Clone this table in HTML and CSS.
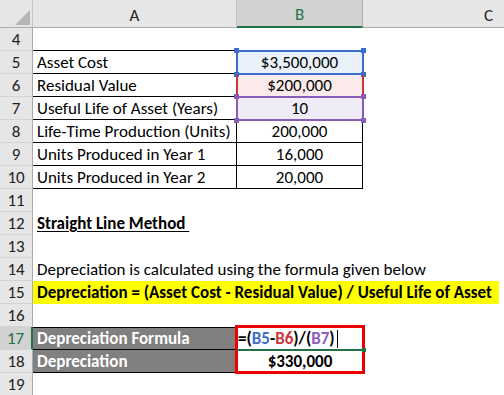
FILE: index.html
```html
<!DOCTYPE html>
<html>
<head>
<meta charset="utf-8">
<link rel="stylesheet" href="styles.css">
</head>
<body>
<div class="sheet">
  <div class="corner"><svg width="33" height="28" viewBox="0 0 33 28"><polygon points="30,10 30,25 15,25" fill="#b5b5b5"/></svg></div>
  <div class="colhead">A</div>
  <div class="colhead sel">B</div>
  <div class="colhead c">C</div>

  <div class="rh">4</div><div class="cell bb"></div><div class="cell bb"></div><div class="cell"></div>
  <div class="rh">5</div><div class="cell lbl bb br">Asset Cost</div><div class="cell val bb br fill-blue">$3,500,000</div><div class="cell"></div>
  <div class="rh">6</div><div class="cell lbl bb br">Residual Value</div><div class="cell val bb br fill-red">$200,000</div><div class="cell"></div>
  <div class="rh">7</div><div class="cell lbl bb br">Useful Life of Asset (Years)</div><div class="cell val bb br fill-purple">10</div><div class="cell"></div>
  <div class="rh">8</div><div class="cell lbl bb br">Life-Time Production (Units)</div><div class="cell val bb br">200,000</div><div class="cell"></div>
  <div class="rh">9</div><div class="cell lbl bb br">Units Produced in Year 1</div><div class="cell val bb br">16,000</div><div class="cell"></div>
  <div class="rh">10</div><div class="cell lbl bb br">Units Produced in Year 2</div><div class="cell val bb br">20,000</div><div class="cell"></div>
  <div class="rh">11</div><div class="cell"></div><div class="cell"></div><div class="cell"></div>
  <div class="rh">12</div><div class="cell lbl bold"><span class="ul">Straight Line Method&nbsp;</span></div><div class="cell"></div><div class="cell"></div>
  <div class="rh">13</div><div class="cell"></div><div class="cell"></div><div class="cell"></div>
  <div class="rh">14</div><div class="cell lbl span3">Depreciation is calculated using the formula given below</div>
  <div class="rh">15</div><div class="cell lbl span3 bold yellow">Depreciation = (Asset Cost - Residual Value) / Useful Life of Asset</div>
  <div class="rh">16</div><div class="cell"></div><div class="cell"></div><div class="cell"></div>
  <div class="rh active">17</div><div class="cell lbl bold gray bt bb">Depreciation Formula</div><div class="cell lbl bold formula">=(<span class="ref-b">B5</span>-<span class="ref-r">B6</span>)/(<span class="ref-p">B7</span>)<span class="caret"></span></div><div class="cell"></div>
  <div class="rh">18</div><div class="cell lbl bold gray bb">Depreciation</div><div class="cell val bold">$330,000</div><div class="cell"></div>
  <div class="rh">19</div><div class="cell"></div><div class="cell"></div><div class="cell"></div>

  <div class="refbox blue"><i class="h tl"></i><i class="h tr"></i><i class="h bl"></i><i class="h br2"></i></div>
  <div class="refbox red"></div>
  <div class="refbox purple"><i class="h tl"></i><i class="h tr"></i><i class="h bl"></i><i class="h br2"></i></div>
  <div class="redbox"></div>
  <div class="activeline"><i class="handle"></i></div>
</div>
</body>
</html>
```
FILE: styles.css
```css
html, body {
  margin: 0;
  padding: 0;
  background: #ffffff;
}
.sheet {
  position: relative;
  display: grid;
  grid-template-columns: 33px 204px 126px 141px;
  grid-template-rows: 28px repeat(16, 23px);
  width: 504px;
  height: 395px;
  overflow: hidden;
  font-family: "Carlito", "Lato", "Liberation Sans", sans-serif;
  font-size: 17px;
  color: #000;
}
.corner {
  background: #e6e6e6;
  border-right: 1px solid #c4c4c4;
  border-bottom: 1px solid #ababab;
  box-sizing: border-box;
}
.corner svg { display: block; }
.colhead {
  background: #e6e6e6;
  border-right: 1px solid #c4c4c4;
  border-bottom: 1px solid #ababab;
  box-sizing: border-box;
  display: flex;
  align-items: center;
  justify-content: center;
  padding-top: 3px;
  color: #222;
  font-size: 17px;
}
.colhead.sel {
  background: #d2d2d2;
  color: #217346;
  border-bottom: 2px solid #217346;
  border-right: 1px solid #ababab;
}
.colhead.c {
  justify-content: flex-end;
  padding-right: 11px;
  border-right: none;
}
.rh {
  background: #e6e6e6;
  border-right: 1px solid #ababab;
  border-bottom: 1px solid #d4d4d4;
  box-sizing: border-box;
  display: flex;
  align-items: center;
  justify-content: center;
  color: #222;
  font-size: 17px;
}
.rh.active {
  background: #d2d2d2;
  color: #217346;
  border-right: 2px solid #217346;
}
.cell {
  box-sizing: border-box;
  display: flex;
  align-items: center;
  white-space: nowrap;
  overflow: visible;
  min-width: 0;
}
.lbl { padding-left: 4px; }
.val { justify-content: center; }
.bold { font-weight: bold; }
.bb { border-bottom: 1px solid #000; }
.bt { border-top: 1px solid #000; }
.br { border-right: 1px solid #000; }
.span3 { grid-column: span 3; }
.yellow {
  background: #ffff00;
  margin-right: 5px;
}
.ul {
  text-decoration: underline;
  text-underline-offset: 2px;
}
.gray {
  background: #808080;
  color: #ffffff;
}
.fill-blue { background: #e8f0f9; }
.fill-red { background: #fbeaea; }
.fill-purple { background: #f0ecf7; }
.formula { padding-left: 1px; }
.ref-b { color: #3d6fc7; }
.ref-r { color: #c8383a; }
.ref-p { color: #8a60b8; }
.caret {
  display: inline-block;
  width: 1px;
  height: 18px;
  background: #000;
  margin-left: 2px;
}
.refbox {
  position: absolute;
  box-sizing: border-box;
  left: 236px;
  width: 128px;
}
.refbox.blue {
  top: 50px;
  height: 25px;
  border: 2px solid #3b6dcb;
}
.refbox.red {
  top: 75px;
  height: 22px;
  border-left: 2px solid #c8383a;
  border-right: 2px solid #c8383a;
}
.refbox.purple {
  top: 96px;
  height: 25px;
  border: 2px solid #8a5bb8;
}
.h {
  position: absolute;
  width: 5px;
  height: 5px;
}
.refbox.blue .h { background: #3b6dcb; }
.refbox.purple .h { background: #8a5bb8; }
.h.tl { left: -4px; top: -4px; }
.h.tr { right: -4px; top: -4px; }
.h.bl { left: -4px; bottom: -4px; }
.h.br2 { right: -4px; bottom: -4px; }
.redbox {
  position: absolute;
  left: 235px;
  top: 325px;
  width: 130px;
  height: 49px;
  box-sizing: border-box;
  border: 3px solid #ee0000;
}
.activeline {
  position: absolute;
  left: 237px;
  top: 349px;
  width: 126px;
  height: 2px;
  background: #217346;
}
.handle {
  position: absolute;
  right: -3px;
  top: -1px;
  width: 4px;
  height: 4px;
  background: #217346;
}
```
